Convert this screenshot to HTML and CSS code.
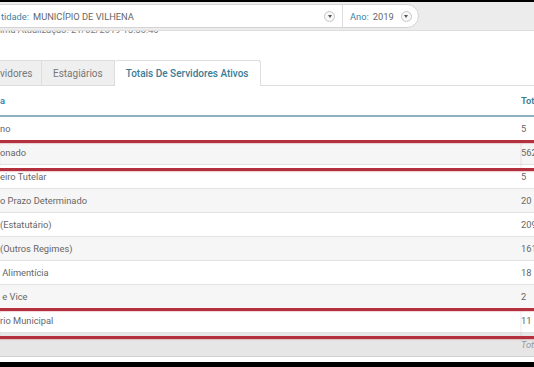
FILE: index.html
```html
<!DOCTYPE html>
<html lang="pt-BR">
<head>
  <meta charset="UTF-8" />
  <meta name="viewport" content="width=device-width, initial-scale=1.0"/>
  <title>Totais De Servidores Ativos</title>
  <link rel="stylesheet" href="styles.css">
</head>
<body>

  <div class="frame-top"></div>

  <div class="filters">
    <div class="pill">
      <div class="pill-item entidade">
        <span class="label">tidade:</span>
        <span class="value">MUNICÍPIO DE VILHENA</span>
        <span class="caret"></span>
      </div>
      <div class="pill-item ano">
        <span class="label">Ano:</span>
        <span class="value">2019</span>
        <span class="caret"></span>
      </div>
    </div>
  </div>

  <div class="update">
    <span>ima Atualização: 21/02/2019 13:30:45</span>
  </div>

  <div class="tabs">
    <div class="tab first">vidores</div>
    <div class="tab">Estagiários</div>
    <div class="tab active">Totais De Servidores Ativos</div>
  </div>

  <table class="totals">
    <thead>
      <tr>
        <th>a</th>
        <th class="num">Total</th>
      </tr>
    </thead>
    <tbody>
      <tr><td>no</td><td class="num">5</td></tr>
      <tr class="marked"><td>onado</td><td class="num">562</td></tr>
      <tr><td>eiro Tutelar</td><td class="num">5</td></tr>
      <tr><td>o Prazo Determinado</td><td class="num">20</td></tr>
      <tr><td>(Estatutário)</td><td class="num">209</td></tr>
      <tr><td>(Outros Regimes)</td><td class="num">161</td></tr>
      <tr><td>&nbsp;Alimentícia</td><td class="num">18</td></tr>
      <tr><td>&nbsp;e Vice</td><td class="num">2</td></tr>
      <tr class="marked"><td>rio Municipal</td><td class="num">11</td></tr>
    </tbody>
    <tfoot>
      <tr><td></td><td class="num">Total</td></tr>
    </tfoot>
  </table>

  <div class="frame-bottom"></div>

</body>
</html>
```

FILE: styles.css
```css
html, body {
  margin: 0;
  padding: 0;
}

body {
  width: 534px;
  height: 367px;
  overflow: hidden;
  position: relative;
  background: #fff;
  font-family: Roboto, "Noto Sans", Arial, sans-serif;
  font-size: 9.3px;
  color: #666;
}

.frame-top {
  height: 2px;
  background: #000;
}

.frame-bottom {
  position: absolute;
  left: 0;
  right: 0;
  bottom: 0;
  height: 5px;
  background: #000;
}

/* filter bar */
.filters {
  height: 28px;
  background: #ececec;
  border-bottom: 1px solid #dedede;
  display: flex;
  align-items: center;
}

.pill {
  display: flex;
  align-items: center;
  height: 22px;
  margin-left: -12px;
  background: #fff;
  border: 1px solid #d4d4d4;
  border-radius: 0 12px 12px 0;
}

.pill-item {
  display: flex;
  align-items: center;
  height: 100%;
}

.pill-item .label {
  color: #3a83a4;
}

.pill-item .value {
  margin-left: 4px;
  color: #666;
}

.entidade {
  width: 354px;
  padding-left: 12px;
  box-sizing: border-box;
  border-right: 1px solid #dcdcdc;
}

.entidade .value {
  flex: 1;
}

.entidade .caret {
  margin-right: 7px;
}

.ano {
  padding: 0 6px 0 7px;
}

.ano .caret {
  margin-left: 7px;
}

.caret {
  width: 11px;
  height: 11px;
  box-sizing: border-box;
  border: 1px solid #c8c8c8;
  border-radius: 50%;
  background: #f7f7f7;
  position: relative;
}

.caret::after {
  content: "";
  position: absolute;
  left: 2.5px;
  top: 3.5px;
  border-left: 2.5px solid transparent;
  border-right: 2.5px solid transparent;
  border-top: 3px solid #555;
}

/* last update line, half hidden under the bar */
.update {
  height: 5px;
  overflow: hidden;
  color: #777;
}

.update span {
  display: block;
  margin-top: -7px;
  line-height: 12px;
}

/* tabs */
.tabs {
  display: flex;
  margin-top: 24px;
  height: 25px;
  border-bottom: 1px solid #dddddd;
  font-size: 10px;
}

.tab {
  display: flex;
  align-items: center;
  padding: 0 11px;
  color: #777;
  background: #efefef;
  border: 1px solid #dddddd;
  border-bottom: none;
  border-left: none;
}

.tab.first {
  padding-left: 0;
  width: 42px;
  box-sizing: border-box;
}

.tab.active {
  background: #fff;
  color: #3a7c94;
  font-weight: 500;
  margin-bottom: -1px;
  border-radius: 3px 3px 0 0;
}

/* table */
.totals {
  width: 570px;
  border-collapse: collapse;
}

.totals th,
.totals td {
  text-align: left;
  padding: 0;
  white-space: nowrap;
}

.totals th {
  height: 29px;
  color: #2e88ad;
  font-weight: 600;
  border-bottom: 2px solid #8fb0bf;
  vertical-align: middle;
}

.totals th.num {
  color: #3a7c94;
}

.totals td {
  height: 23px;
  border-bottom: 1px solid #e2e2e2;
  color: #666;
}

.totals .num {
  width: 49px;
}

.totals tbody tr:nth-child(even) {
  background: #f6f6f6;
}

.totals tr.marked td {
  position: relative;
}

.totals tr.marked td::after {
  content: "";
  position: absolute;
  left: 0;
  right: 0;
  top: -1px;
  bottom: -7px;
  border-top: 3px solid #b5303e;
  border-bottom: 3px solid #b5303e;
  box-shadow: 0 1px 1px rgba(200, 80, 90, 0.25), inset 0 1px 1px rgba(200, 80, 90, 0.25);
}

.totals tfoot td {
  height: 23px;
  background: #e6e6e6;
  border-bottom: 1px solid #d0d0d0;
  color: #999;
  font-style: italic;
}
```
